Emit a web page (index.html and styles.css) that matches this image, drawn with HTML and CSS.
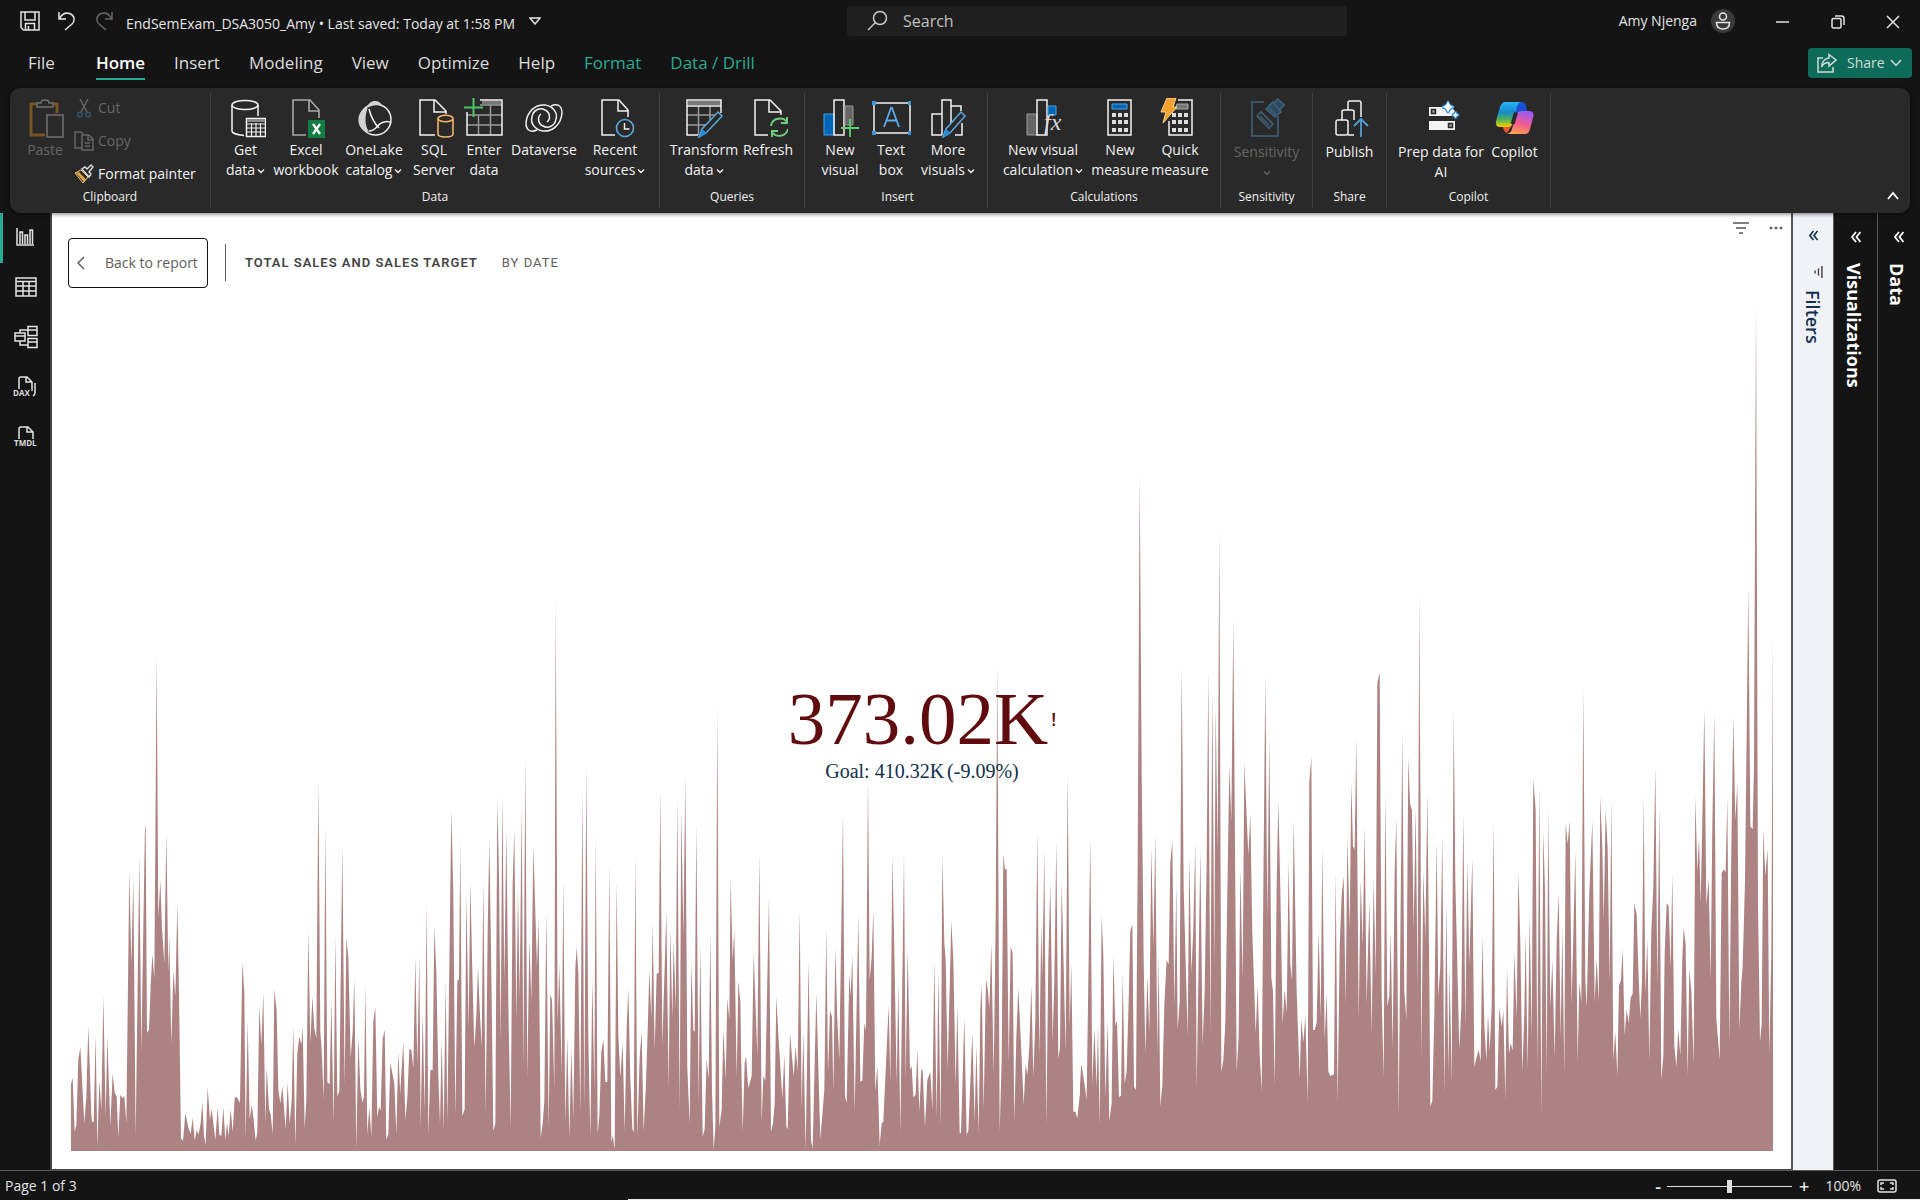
FILE: index.html
```html
<!DOCTYPE html>
<html lang="en">
<head>
<meta charset="utf-8">
<title>EndSemExam_DSA3050_Amy</title>
<link rel="stylesheet" href="styles.css">
</head>
<body>
<svg class="defs" aria-hidden="true">
  <symbol id="chev" viewBox="0 0 8 6"><path d="M1 1.5 4 4.5 7 1.5" fill="none" stroke="currentColor" stroke-width="1.4"/></symbol>
  <symbol id="dbl" viewBox="0 0 10 12"><path d="M5 1 1 6l4 5M9.500 1l-4 5 4 5" fill="none" stroke="currentColor" stroke-width="1.800"/></symbol>
</svg>
<div class="app">
  <header class="titlebar">
    <div class="quick">
      <button class="qbtn" aria-label="Save"><svg width="20" height="20" viewBox="0 0 20 20"><path d="M1 1h18v18H3.500L1 16.500zM5 1v8h10V1M5.500 19v-6.500h9V19M8.500 19v-4" class="ln"/></svg></button>
      <button class="qbtn" aria-label="Undo"><svg width="20" height="20" viewBox="0 0 20 20"><path d="M2 1v7h7M2.500 7.500C5 3 9 1.500 12.500 2.500c5 1.500 6 7 2.500 10.500L8 19" class="ln"/></svg></button>
      <button class="qbtn dim" aria-label="Redo" disabled><svg width="20" height="20" viewBox="0 0 20 20"><path d="M18 1v7h-7M17.500 7.500C15 3 11 1.500 7.500 2.500c-5 1.500-6 7-2.500 10.500L12 19" class="ln"/></svg></button>
      <span class="doc">EndSemExam_DSA3050_Amy • Last saved: Today at 1:58 PM</span>
      <button class="docmenu" aria-label="File details"><svg width="12" height="8" viewBox="0 0 12 8"><path d="M1 1h10L6 7z" class="ln"/></svg></button>
    </div>
    <label class="search"><svg width="22" height="22" viewBox="0 0 22 22"><circle cx="13" cy="8" r="6.500" class="ln"/><path d="M8.500 12.500 1 20" class="ln"/></svg><input type="text" placeholder="Search" aria-label="Search"></label>
    <div class="window">
      <span>Amy Njenga</span>
      <svg class="avatar" width="24" height="24" viewBox="0 0 24 24"><circle cx="12" cy="12" r="12" fill="#3a3a3a"/><circle cx="12" cy="7.500" r="3.500" class="ln"/><path d="M5.500 13.500h13c0 4-2.500 6.500-6.500 6.500s-6.500-2.500-6.500-6.500z" class="ln"/></svg>
      <button class="wbtn" aria-label="Minimize"><svg width="14" height="14" viewBox="0 0 14 14"><path d="M0 7h13" class="ln"/></svg></button>
      <button class="wbtn" aria-label="Restore"><svg width="14" height="14" viewBox="0 0 14 14"><rect x="1" y="3.500" width="9" height="9.500" rx="1.500" class="ln"/><path d="M4 1h6.500Q13 1 13 3.500V10" class="ln"/></svg></button>
      <button class="wbtn" aria-label="Close"><svg width="14" height="14" viewBox="0 0 14 14"><path d="m1 1 12 12M13 1 1 13" class="ln"/></svg></button>
    </div>
  </header>

  <nav class="tabs" aria-label="Ribbon tabs">
    <a href="#" class="file">File</a><a href="#" class="on">Home</a><a href="#">Insert</a><a href="#">Modeling</a><a href="#">View</a><a href="#">Optimize</a><a href="#">Help</a><a href="#" class="ctx">Format</a><a href="#" class="ctx">Data / Drill</a>
    <button class="share"><svg width="20" height="20" viewBox="0 0 20 20"><path d="M6 5H1v14h15v-5M12 1.500 19 7l-7 6V9.500C8 9.500 6 11 4.500 14 5 8.500 8 5.500 12 5z" class="ln"/></svg>Share<svg width="12" height="8" viewBox="0 0 12 8"><path d="m1 1 5 5.500L11 1" class="ln"/></svg></button>
  </nav>

  <section class="ribbon">
    <div class="group clip">
      <div class="tools">
        <button class="tool dim" disabled><svg viewBox="0 0 40 40"><path d="M13 6H6v31h14M27 6h5v9" fill="none" stroke="#7a5325" stroke-width="3"/><path d="M12 9V5h4c0-4 8-4 8 0h4v4z" fill="#292929" stroke="#707070" stroke-width="1.500"/><rect x="22" y="17" width="16" height="22" fill="#292929" stroke="#707070" stroke-width="1.500"/></svg><span>Paste</span></button>
        <div class="stack">
          <button class="row dim" disabled><svg viewBox="0 0 20 20"><path d="m6 1 7 13M14 1 7 14" class="ln"/><circle cx="6" cy="16.500" r="2.300" fill="none" stroke="#33566e" stroke-width="1.500"/><circle cx="14" cy="16.500" r="2.300" fill="none" stroke="#33566e" stroke-width="1.500"/></svg>Cut</button>
          <button class="row dim" disabled><svg viewBox="0 0 20 20"><path d="M8 17H1V1h6l2 2M8 4h7l4 4v11H8zM14 4v5h5M11 12h5M11 15h5" class="ln"/></svg>Copy</button>
          <button class="row"><svg viewBox="0 0 20 20"><path d="m2 9 8 9 2-2.500L5 8z" fill="#e8a33c"/><path d="m1 9 8 10 5-6-7-7z" fill="none" stroke="#f5c77e"/><path d="m8 5 7 8 2-3-2-2 4-5-2-2-4 4-2-2z" fill="#292929" stroke="#ddd" stroke-width="1.400"/></svg>Format painter</button>
        </div>
      </div>
      <div class="gname">Clipboard</div>
    </div>

    <div class="group data">
      <div class="tools">
        <button class="tool"><svg viewBox="0 0 40 40"><ellipse cx="19" cy="7" rx="13" ry="4.500" class="ln"/><path d="M6 7v26c0 2 5 4 12 4.500M32 7v11" class="ln"/><path d="M20.500 20.500h19v18h-19z" class="ln"/><path d="M21 22.500h18" stroke="#8a8a8a" stroke-width="3"/><path d="M21 26h18M21 30h18M21 34h18M25.500 25v13M30 25v13M34.500 25v13" class="ln thin"/></svg><span>Get</span><span>data<svg class="cv"><use href="#chev"/></svg></span></button>
        <button class="tool"><svg viewBox="0 0 40 40"><path d="M20 37H7V2h17l9 10v8M23 2v11h10" fill="none" stroke="#a8a8a8" stroke-width="1.600"/><rect x="22" y="22" width="17" height="18" fill="#107c41"/><path d="m27 26 7 10M34 26l-7 10" stroke="#fff" stroke-width="2.200"/></svg><span>Excel</span><span>workbook</span></button>
        <button class="tool"><svg viewBox="0 0 40 40"><circle cx="21.500" cy="21.500" r="15.500" class="ln"/><path d="M14 9C4 12 2 23 7 30c3 4 6 4 8 3.500C10 27 11 17 14 9zM13 10c2-9 13-9 16-1-5-3-11-2-16 1z" fill="#d2d2d2"/><path d="M15 11c2 8 5 14 10 19M15 33c8 0 8-8 15-9 3-1 5-1 7 1" class="ln"/></svg><span>OneLake</span><span>catalog<svg class="cv"><use href="#chev"/></svg></span></button>
        <button class="tool"><svg viewBox="0 0 40 40"><path d="M21 37H6V2h15l11 11v3M20 2v12h12" class="ln"/><path d="M24 21v15c0 4 15 4 15 0V21" fill="#292929" stroke="#f3b567" stroke-width="1.600"/><ellipse cx="31.500" cy="20.500" rx="7.500" ry="3.200" fill="#292929" stroke="#f3b567" stroke-width="1.600"/></svg><span>SQL</span><span>Server</span></button>
        <button class="tool"><svg viewBox="0 0 40 40"><path d="M18 4.500h19" stroke="#777" stroke-width="4"/><path d="M16 7h22M16 17h22M3 17h35M3 27h35M14.500 17v20M26.500 7v30" fill="none" stroke="#999" stroke-width="1.500"/><path d="M16 2h22v35H3V14" class="ln"/><path d="M0 9.500h19M9.500 0v19" stroke="#4ec466" stroke-width="2"/></svg><span>Enter</span><span>data</span></button>
        <button class="tool"><svg viewBox="0 0 40 40"><path id="swirl" d="M13 32C6 35 2 32 2 25 3 13 12 6 21 7c8 1 13 8 11 14-1 7-8 10-13 7-5-2-6-9-2-12" class="ln"/><use href="#swirl" transform="rotate(180 20 20)"/></svg><span>Dataverse</span></button>
        <button class="tool"><svg viewBox="0 0 40 40"><path d="M20 37H7V2h17l9 10v7M23 2v11h10" class="ln"/><circle cx="30" cy="30" r="8.500" fill="none" stroke="#5aa9dd" stroke-width="1.600"/><path d="M29.500 25v6h5" class="ln"/></svg><span>Recent</span><span>sources<svg class="cv"><use href="#chev"/></svg></span></button>
      </div>
      <div class="gname">Data</div>
    </div>

    <div class="group queries">
      <div class="tools">
        <button class="tool"><svg viewBox="0 0 40 40"><path d="M4 5h33" stroke="#777" stroke-width="4"/><path d="M3 17h29M3 27h20M14.500 8v29M26 8v14" fill="none" stroke="#999" stroke-width="1.500"/><path d="M37 15V2H3v35h11M3 8h34" class="ln"/><path d="m15 39 3-8 16-17 4 4-16 17z" fill="#292929" stroke="#5aa9dd" stroke-width="1.500"/><path d="m15 39 3-8 5 4z" fill="#2a8bd8"/></svg><span>Transform</span><span>data<svg class="cv"><use href="#chev"/></svg></span></button>
        <button class="tool"><svg viewBox="0 0 40 40"><path d="M20 37H7V2h15l11 11v4M21 2v12h12" class="ln"/><path d="M23 28c1-8 12-10 16-4M39 19v6h-6M40 31c-2 8-12 9-16 3M24 39v-6h6" fill="none" stroke="#6fce7c" stroke-width="1.900"/></svg><span>Refresh</span></button>
      </div>
      <div class="gname">Queries</div>
    </div>

    <div class="group insert">
      <div class="tools">
        <button class="tool"><svg viewBox="0 0 40 40"><rect x="4" y="16" width="10" height="21" fill="#0067b8" stroke="#4aa0e0"/><path d="M14 37V2h10v35z" class="ln"/><path d="M25 8h8v19h-8z" fill="#666" stroke="#999"/><path d="M21 30h18M30 21v18" stroke="#5fd070" stroke-width="1.800"/></svg><span>New</span><span>visual</span></button>
        <button class="tool"><svg viewBox="0 0 40 40"><path d="M3 5h36v30H3z" class="ln"/><path d="M1 3h4v4H1zM37 3h4v4h-4zM1 33h4v4H1zM37 33h4v4h-4z" fill="#3a96dd"/><path d="m13 29 7-19h1l7 19M15.500 22.500h10" fill="none" stroke="#5aa9e8" stroke-width="1.800"/></svg><span>Text</span><span>box</span></button>
        <button class="tool"><svg viewBox="0 0 40 40"><path d="M14 37H4V16h10M14 37V2h9v24M23 8h10v5M27 37h7V25" class="ln"/><path d="m15 39 3-8 15-17 4 4-15 17z" fill="#292929" stroke="#5aa9dd" stroke-width="1.500"/><path d="m15 39 3-8 5 4z" fill="#2a8bd8"/></svg><span>More</span><span>visuals<svg class="cv"><use href="#chev"/></svg></span></button>
      </div>
      <div class="gname">Insert</div>
    </div>

    <div class="group calc">
      <div class="tools">
        <button class="tool"><svg viewBox="0 0 40 40"><rect x="4" y="16" width="10" height="21" fill="#666" stroke="#999"/><path d="M14 37V2h10v35z" class="ln"/><path d="M25 8h8v9h-8z" fill="#0067b8" stroke="#4aa0e0"/><text x="21" y="32" class="fx">fx</text></svg><span>New visual</span><span>calculation<svg class="cv"><use href="#chev"/></svg></span></button>
        <button class="tool"><svg viewBox="0 0 40 40"><path d="M8 2h23v35H8z" class="ln"/><path d="M12 6h15v5H12z" fill="#0067b8" stroke="#4aa0e0"/><path d="M12 17h16M12 24h16M12 32h16" stroke="#ddd" stroke-width="4" stroke-dasharray="4 2"/></svg><span>New</span><span>measure</span></button>
        <button class="tool"><svg viewBox="0 0 40 40"><path d="M18 2h14v35H9V23" class="ln"/><path d="M17 6h11v5H15z" fill="#777" stroke="#aaa"/><path d="M12 17h16M12 24h16M12 32h16" stroke="#ddd" stroke-width="4" stroke-dasharray="4 2"/><path d="M7 0h9l-3 9h4L3 25l3-11H1z" fill="#f2a12c" stroke="#ffd28a"/></svg><span>Quick</span><span>measure</span></button>
      </div>
      <div class="gname">Calculations</div>
    </div>

    <div class="group sens">
      <div class="tools">
        <button class="tool wide dim" disabled><svg viewBox="0 0 40 40"><g fill="none" stroke="#3f6078" stroke-width="1.600"><path d="M17 4H5v34h26V18"/><path d="m10 18 4-4 12 12-4 4zM13 18l9 9"/><path d="m19 11 7-7 8 10-6 5zM27 5l4-4 6 6-5 6M21 9l9 9" fill="#2d4a5e"/></g></svg><span>Sensitivity</span><span class="only"><svg class="cv"><use href="#chev"/></svg></span></button>
      </div>
      <div class="gname">Sensitivity</div>
    </div>

    <div class="group pub">
      <div class="tools">
        <button class="tool wide"><svg viewBox="0 0 40 40"><g class="ln"><rect x="6" y="22" width="12" height="15" rx="2"/><path d="M12 22v-8q0-2 2-2h8q2 0 2 2v8M18 37h6M18 12V5q0-2 2-2h9q2 0 2 2v14"/></g><path d="M31 39V21M24 28l7-7 7 7" fill="none" stroke="#4f9fd6" stroke-width="1.800"/></svg><span>Publish</span></button>
      </div>
      <div class="gname">Share</div>
    </div>

    <div class="group ai">
      <div class="tools">
        <button class="tool wide"><svg viewBox="0 0 40 40"><path d="M8 9h22l4 4v5H8zM8 23h26v9H8z" fill="#f4f4f4"/><path d="M10.500 11.500h4v4h-4zM27.500 25.500h4v4h-4z" fill="#999" stroke="#292929" stroke-width="1.500"/><path d="M27 3q1 5 6 6-5 1-6 6-1-5-6-6 5-1 6-6zM34.500 13.500q.5 3 3.500 3.500-3 .5-3.500 3.500-.5-3-3.500-3.500 3-.5 3.500-3.500z" fill="#2a8bd8" stroke="#2a8bd8" stroke-width="2.400"/><path d="M27 3q1 5 6 6-5 1-6 6-1-5-6-6 5-1 6-6zM34.500 14q.5 2.500 3 3-2.500.5-3 3-.5-2.500-3-3 2.500-.5 3-3z" fill="#fff"/></svg><span>Prep data for</span><span>AI</span></button>
        <button class="tool wide"><svg viewBox="0 0 40 40"><defs><linearGradient id="ca" x1="0" y1="0" x2="0" y2="1"><stop offset="0" stop-color="#2bb3f3"/><stop offset=".4" stop-color="#168ad0"/><stop offset=".7" stop-color="#4fb35b"/><stop offset="1" stop-color="#ffd000"/></linearGradient><linearGradient id="cb" x1=".6" y1="0" x2=".3" y2="1"><stop offset="0" stop-color="#9a5cf5"/><stop offset=".5" stop-color="#ee5a93"/><stop offset="1" stop-color="#ffa04d"/></linearGradient></defs><path d="M22 4h5q3 0 4 4l1 5h-7l-5 5z" fill="#1850d8"/><path d="M12 35q-2 0-3-3l-2-5h8l4-3z" fill="#f05a2c"/><path d="M10 4h16q-3 1-4 5l-4 15q-1 5-6 5H5q-5 0-4-6l4-14q2-5 5-5z" fill="url(#ca)"/><path d="M30 36H12q4-1 5-5l4-13q1-5 6-5h7q6 0 4 7l-3 11q-1 5-5 5z" fill="url(#cb)"/><path d="M21 14.500 17.500 26" stroke="#292929" stroke-width="4"/></svg><span>Copilot</span></button>
      </div>
      <div class="gname">Copilot</div>
    </div>
    <button class="fold" aria-label="Collapse ribbon"><svg width="12" height="10" viewBox="0 0 12 10"><path d="m1 8 5-6 5 6" fill="none" stroke="#fff" stroke-width="1.800"/></svg></button>
  </section>

  <div class="work">
    <nav class="views" aria-label="Views">
      <button class="sel" aria-label="Report view"><svg viewBox="0 0 24 24"><path d="M3 3v17h17M6 19V7h2.500v12M11 19v-9h2.500v9M16 19V5h2.500v14" class="ln"/></svg></button>
      <button aria-label="Table view"><svg viewBox="0 0 24 24"><path d="M2 3h20v18H2zM2 6.500h20M2 11h20M2 16h20M9 6v15M15 6v15" class="ln"/></svg></button>
      <button aria-label="Model view"><svg viewBox="0 0 24 24"><path d="M1 8h10v8H1zM1 11h10M14 1.500h9v9h-9zM14 5h9M14 13.500h9v9h-9zM14 17h9M6 8V5h8M6 16v4h8" class="ln"/></svg></button>
      <button aria-label="DAX query view"><svg viewBox="0 0 24 24"><path d="M5 14V4q0-2 2-2h6l5 5v9M12 2v5h6M21 8v10q0 2-2 3" class="ln"/><text x="-1" y="21" class="cap">DAX</text></svg></button>
      <button aria-label="TMDL view"><svg viewBox="0 0 24 24"><path d="M5 14V4q0-2 2-2h7l5 5v7M13 2v5h6" class="ln"/><text x="0" y="21" class="cap">TMDL</text></svg></button>
    </nav>

    <main class="canvas">
      <div class="drill">
        <button class="back"><svg width="8" height="14" viewBox="0 0 8 14"><path d="M7 1 1 7l6 6" class="ln"/></svg>Back to report</button>
        <h1>TOTAL SALES AND SALES TARGET</h1>
        <span class="by">BY DATE</span>
        <button class="vis first" aria-label="Filters"><svg width="16" height="14" viewBox="0 0 16 14"><path d="M0 2h16M3 7h10M6 12h4" class="ln"/></svg></button>
        <button class="vis" aria-label="More options"><svg width="14" height="4" viewBox="0 0 14 4"><circle cx="2" cy="2" r="1.500"/><circle cx="7" cy="2" r="1.500"/><circle cx="12" cy="2" r="1.500"/></svg></button>
      </div>
      <div class="kpi">
        <svg class="trend" viewBox="71 290 1702 861" preserveAspectRatio="none" role="img" aria-label="Total sales trend by date">
          <polygon transform="translate(60 600) scale(.33333 .35714)" points="33,1543 33,1355 38,1338 44,1490 49,1470 55,1285 61,1252 73,1465 79,1390 85,1192 94,1440 96,1460 101,1462 107,1218 112,1530 118,1345 124,1428 130,1110 137,1450 142,1222 151,1472 158,1325 164,1380 170,1390 175,1505 181,1385 188,1395 193,1388 199,1465 208,760 214,1020 220,778 227,1505 238,715 244,1265 255,630 257,640 261,1212 267,1205 272,1080 277,992 283,1060 290,160 295,890 301,785 306,920 313,1018 319,655 325,1042 328,942 334,1245 340,1038 346,1110 352,850 357,1100 363,1508 369,1514 376,1438 386,1480 392,1496 398,1450 404,1514 410,1485 416,1496 422,1465 427,1405 432,1500 437,1525 443,1365 450,1455 455,1425 466,1512 473,1420 478,1498 484,1500 490,1420 496,1512 501,1465 506,1500 512,1425 518,1490 524,1395 530,1391 540,1408 547,1015 553,1100 557,1510 563,1178 569,1455 575,1413 581,1455 587,1514 592,1490 598,1135 604,1245 610,1100 616,1465 620,1308 627,1425 632,1440 638,1495 643,1090 650,1150 655,1370 661,1410 667,1360 677,1482 683,1350 689,1468 695,1400 700,1192 706,1528 712,1270 718,1222 724,1245 728,1195 734,1480 739,1400 745,925 751,1242 757,1110 763,1200 769,1228 775,508 781,1210 785,1260 791,1398 796,635 802,1350 809,1355 814,1120 821,1468 826,940 832,1390 838,1375 847,690 854,1360 859,945 865,1000 872,1280 878,1210 883,1060 889,1535 895,1220 901,1370 907,1408 912,1390 916,1080 922,1496 928,1420 934,1503 940,1180 946,1140 952,1448 957,1420 962,1428 968,1230 974,1203 979,1512 985,1495 991,1295 1003,1355 1009,1495 1015,1265 1021,1390 1021,1543"/>
          <polygon transform="translate(400 580) scale(.33333 .36990)" points="0,1544 0,1395 10,1248 16,1460 22,1400 28,1268 34,1270 40,1320 46,1020 52,1310 58,1018 62,1480 68,1170 74,1435 80,870 85,1500 91,1325 98,1325 103,940 109,1060 115,1340 120,1470 125,1245 131,1488 137,1085 142,1465 154,620 160,850 166,1450 172,1083 177,1080 181,710 187,1450 194,1430 199,850 206,1212 211,815 217,1060 223,1265 229,1180 234,1045 239,1160 245,1262 250,812 257,1442 263,950 268,700 274,1060 280,1488 286,1470 292,590 297,800 302,1245 307,582 313,1085 319,675 326,1200 332,1485 338,820 343,675 349,1190 354,840 359,1130 365,610 370,1320 376,480 382,1345 388,972 394,1138 400,720 406,900 411,1045 416,918 422,1508 428,1470 433,1410 439,895 446,1480 451,1120 456,1135 463,1375 467,50 473,1200 478,1038 485,1335 490,808 496,1465 502,1235 508,1508 514,1268 520,1455 526,1050 530,992 535,1060 541,1442 547,565 553,1430 559,500 565,1240 571,1505 577,1078 583,1380 587,690 593,1495 598,1450 604,1275 610,1243 616,1357 622,1357 628,770 634,1520 638,1502 644,1538 650,812 655,1230 661,1345 668,1250 674,1492 680,1210 685,1105 691,1350 697,1485 701,1492 706,742 712,1505 719,1290 725,1222 731,1490 737,1380 743,1220 748,1055 754,1185 758,925 764,1270 770,1065 776,1062 781,568 787,1258 799,895 806,1375 811,942 817,1185 821,975 827,1160 832,590 839,1435 844,620 850,965 856,530 862,1320 869,1470 874,1035 880,1218 884,1222 889,662 896,1415 901,985 908,1505 914,1485 920,1295 926,1350 931,955 936,1380 941,1540 946,1480 952,345 958,1480 965,1430 970,1213 977,1350 982,1133 988,1188 992,805 998,1030 1003,945 1010,1345 1015,1085 1021,1140 1021,1544"/>
          <polygon transform="translate(740 660) scale(.33333)" points="0,1473 0,1015 8,1415 14,1210 18,1188 25,1285 35,1248 41,878 52,1190 58,580 65,1385 70,1248 76,1262 87,710 93,1415 99,1390 104,1330 109,1008 115,1125 127,1315 133,1185 139,1400 143,1408 150,1120 161,1248 167,1160 173,1235 179,750 185,1345 190,1115 197,1470 206,900 213,1440 218,1465 229,1000 241,1438 253,1290 259,805 264,1240 270,1052 276,1070 280,1295 286,865 292,1080 298,1200 309,460 315,1310 320,1328 328,940 332,1008 337,885 344,1355 355,765 361,1265 367,1262 373,1090 378,1110 384,355 389,960 395,890 400,750 406,1295 412,1215 419,1455 425,1390 430,1385 446,1035 451,1265 457,588 463,870 470,1270 475,965 481,1415 492,582 497,1260 503,865 510,1228 515,1218 520,1312 527,1305 532,1168 538,1355 544,1228 548,1230 555,1402 562,1260 571,1236 577,1350 583,903 590,1375 595,935 602,1400 607,585 613,850 617,900 623,1228 634,782 640,900 647,1275 652,1035 659,1418 663,1420 673,1075 680,1425 685,1412 697,1120 704,1385 709,1155 716,1420 721,1050 725,972 731,1350 738,958 743,985 748,1045 754,850 761,1245 767,780 772,15 779,1415 785,1200 790,583 795,630 800,625 806,1210 812,860 818,880 823,1385 829,1130 835,985 845,1195 851,1335 857,1212 862,1245 868,1160 874,975 880,1250 886,1080 892,512 898,1190 904,790 907,950 913,570 919,1395 925,900 931,670 938,1145 943,960 949,545 955,1195 960,1165 965,665 977,1175 983,340 989,1100 994,910 1000,1355 1006,1355 1012,1375 1021,1290 1021,1473"/>
          <polygon transform="translate(1080 460) scale(.33333 .44643)" points="0,1548 0,1400 4,1352 14,1400 20,1432 31,845 37,1400 43,1272 50,1405 54,1265 59,1490 65,1020 70,1110 76,1428 83,1258 88,1482 95,1440 100,1112 106,1268 111,1255 117,1427 123,1424 128,1152 134,1398 140,1370 146,1210 151,1055 157,1040 162,1402 168,1412 173,900 179,35 185,700 191,1120 196,1330 202,1155 208,1282 214,868 220,1090 226,840 232,1328 236,1110 241,1448 247,1400 253,1220 260,1120 266,1130 271,900 277,855 283,1222 289,950 293,1275 299,1215 305,462 311,960 323,1290 328,888 334,1150 340,1050 346,855 350,1410 361,875 368,1310 374,1190 380,900 385,472 391,1285 397,515 403,1135 407,555 413,875 418,160 424,1370 430,1345 436,1260 448,685 454,810 460,358 470,1370 476,1290 481,915 488,1165 493,678 505,885 511,793 517,1060 523,1190 527,1285 533,1178 539,1330 545,1415 550,960 556,485 562,1025 568,622 574,1160 579,1190 584,1400 590,950 595,765 601,960 608,1265 614,1185 620,1240 626,897 631,1130 636,1165 641,805 650,1190 659,1385 664,1252 670,1305 676,1245 683,1440 688,720 694,665 699,1277 704,1277 710,1260 716,1055 722,1250 727,870 734,1298 740,1195 745,1370 751,1380 762,1376 767,922 773,1440 779,1090 785,975 791,933 797,1220 802,845 809,1050 814,722 819,865 824,872 829,622 836,1255 842,940 848,1085 854,820 860,1218 868,988 875,1285 881,938 887,1155 892,500 899,475 905,1200 911,1385 916,740 922,1224 928,1200 932,1055 938,1318 944,920 949,802 956,1470 967,610 973,1190 979,1255 985,665 990,770 996,785 1001,1050 1007,778 1013,1180 1018,300 1021,800 1021,1548"/>
          <polygon transform="translate(1420 300) scale(.33333 .54845)" points="0,1552 0,770 4,1385 10,1040 16,1165 22,900 28,1240 31,1470 37,1460 43,1300 50,988 55,1270 61,1215 67,975 73,1448 79,1100 85,1410 89,1215 95,1430 101,750 106,1060 118,1368 124,1290 130,935 136,1325 142,1025 148,1212 157,1018 163,1398 170,1380 176,1367 182,1388 187,1160 193,1320 199,1388 204,1300 209,1370 215,1290 221,950 226,1440 232,1435 238,1290 245,1325 250,1295 256,1455 261,1215 267,1375 272,1355 278,1368 283,1192 290,1308 295,1045 301,1170 307,1408 313,1300 317,1155 323,1405 329,1120 335,1345 340,872 347,930 352,1405 358,882 364,1485 370,968 375,1080 380,1410 385,930 391,1290 397,1203 404,1380 410,1170 416,1082 422,1345 427,1145 433,1412 437,953 443,992 449,950 455,1285 466,1005 473,1390 478,1243 484,1282 490,710 496,1240 500,1290 508,1080 517,950 524,1280 530,1200 536,1280 541,905 547,1000 551,1130 557,930 563,1000 569,1245 574,910 580,1385 586,1335 592,1415 597,1250 603,1240 608,1183 614,1340 620,1293 626,1318 632,1272 638,1265 643,1100 650,1120 655,1220 661,1310 666,1240 671,905 676,1265 682,1165 688,1388 694,1150 700,1070 706,850 712,1250 718,925 724,1422 730,1380 734,1190 740,1100 746,1105 752,1220 757,1045 763,1360 769,1398 775,1330 781,1378 787,1200 791,1145 797,1175 803,1415 808,1220 814,1260 821,1392 826,905 832,1042 837,980 842,1100 847,950 853,745 859,1105 866,1055 872,1240 877,960 883,755 889,1310 899,1385 905,1045 911,1038 917,1043 922,908 928,1355 934,1000 940,760 946,950 952,880 958,1330 964,1245 968,1215 975,1060 985,525 991,960 998,965 1002,850 1008,10 1014,1100 1020,1352 1025,1320 1030,965 1036,1050 1043,1000 1048,1378 1054,1190 1059,610 1059,1552"/>
        </svg>
        <div class="reading">
          <div class="value">373.02K<span class="flag">!</span></div>
          <div class="goal"><span>Goal: 410.32K</span><span>(-9.09%)</span></div>
        </div>
      </div>
    </main>

    <aside class="pane filters"><button aria-label="Expand filters"><svg width="9" height="11"><use href="#dbl"/></svg></button><svg class="fi" width="10" height="12" viewBox="0 0 10 12"><path d="M9 0v12M5.500 2.500v7M2 4.500v3" stroke="#444" stroke-width="1.400"/></svg><h2>Filters</h2></aside>
    <aside class="pane"><button aria-label="Expand visualizations"><svg width="10" height="12"><use href="#dbl"/></svg></button><h2>Visualizations</h2></aside>
    <aside class="pane last"><button aria-label="Expand data"><svg width="10" height="12"><use href="#dbl"/></svg></button><h2>Data</h2></aside>
  </div>

  <footer class="status">
    <span class="page">Page 1 of 3</span>
    <button aria-label="Zoom out">-</button>
    <input type="range" min="0" max="100" value="50" aria-label="Zoom">
    <button aria-label="Zoom in">+</button>
    <span class="pct">100%</span>
    <button class="fit" aria-label="Fit to page"><svg width="20" height="14" viewBox="0 0 20 14"><rect x="1" y="1" width="18" height="12" rx="2" class="ln"/><path d="M7 4H4v2M4 8v2h3M13 4h3v2M16 8v2h-3" class="ln"/></svg></button>
  </footer>
</div>
</body>
</html>
```
FILE: styles.css
```css
* { box-sizing: border-box; }
body { margin: 0; background: #141414; color: #e4e4e4; font: 14px/20px "Open Sans", "Noto Sans", sans-serif; }
button, input { font: inherit; color: inherit; background: none; border: 0; padding: 0; margin: 0; }
svg { display: block; flex: none; }
.defs { position: absolute; width: 0; height: 0; }
.ln { fill: none; stroke: currentColor; stroke-width: 1.5; }
.thin { stroke-width: 1.2; }
.app { display: flex; flex-direction: column; min-height: 100vh; }

.titlebar { display: grid; grid-template-columns: 847fr 500fr 573fr; height: 42px; }
.quick { display: flex; align-items: center; padding-left: 20px; }
.qbtn { width: 37px; }
.qbtn.dim { color: #666; width: 32px; }
.doc { padding: 6px 14px 0 0; white-space: nowrap; }
.search { display: flex; align-items: center; gap: 14px; height: 30px; margin-top: 6px; padding-left: 20px; background: #1f1f1f; border-radius: 3px; color: #c8c8c8; }
.search input { flex: 1; min-width: 0; font-size: 16px; outline: none; }
.search input::placeholder { color: #c0c0c0; opacity: 1; }
.window { display: flex; align-items: center; justify-content: flex-end; padding-right: 20px; }
.avatar { margin: 0 41px 0 14px; }
.wbtn { width: 14px; margin-left: 41px; padding-top: 2px; }
.avatar + .wbtn { margin-left: 0; }

.tabs { display: flex; align-items: center; gap: 29px; height: 46px; padding: 0 8px 4px 28px; }
.tabs a { color: #dcdcdc; text-decoration: none; font-size: 17px; line-height: 22px; padding: 6px 0 4px; border-bottom: 2px solid transparent; white-space: nowrap; }
.tabs .file { margin-right: 12px; }
.tabs .on { color: #fff; font-weight: 600; border-color: #28ab93; }
.tabs .ctx { color: #28ab93; font-weight: 500; }
.share { display: flex; align-items: center; gap: 10px; margin-left: auto; width: 104px; height: 30px; padding: 0 9px; border-radius: 4px; background: #0d6b5a; color: #d0dcd8; }
.share svg:last-child { margin-left: -5px; }

.ribbon { display: flex; margin: 0 10px; height: 125px; background: #292929; border-radius: 10px; padding: 5px 0; position: relative; z-index: 1; box-shadow: 0 1px 4px #0008; color: #f2f2f2; }
.group { display: flex; flex-direction: column; justify-content: space-between; border-right: 1px solid #404040; padding: 5px 8px 3px; }
.tools { display: grid; }
.tool { display: flex; flex-direction: column; align-items: center; white-space: nowrap; line-height: 20px; min-width: 0; }
.tool > svg { width: 40px; height: 40px; margin-bottom: 2px; }
.tool.wide > svg { margin-bottom: 4px; }
.tool span { display: flex; align-items: center; gap: 2px; }
.tool span.only { min-height: 20px; }
.cv { width: 8px; height: 6px; }
.tool span:nth-of-type(2) .cv { margin-top: 2px; }
.dim { color: #666; }
.gname { text-align: center; font-size: 12px; line-height: 16px; }
.clip { width: 201px; }
.clip .tools { grid-template-columns: 54px 1fr; }
.stack { display: flex; flex-direction: column; gap: 13px; padding: 0 0 0 2px; }
.row { display: flex; align-items: center; gap: 4px; line-height: 20px; white-space: nowrap; }
.row svg { width: 20px; height: 20px; }
.data .tools { grid-template-columns: 53px 68px 68px 52px 48px 72px 70px; }
.data { width: 449px; }
.queries { width: 145px; }
.queries .tools { grid-template-columns: 72px 56px; }
.insert { width: 183px; padding-left: 11px; }
.insert .tools { grid-template-columns: 48px 54px 60px; }
.calc { width: 233px; }
.calc .tools { grid-template-columns: 94px 60px 60px; }
.sens { width: 92px; }
.pub { width: 74px; }
.ai { width: 164px; }
.ai .tools { grid-template-columns: 92px 55px; }
.fold { margin: auto 11px 7px auto; }
.fx { font: italic 24px "Liberation Serif", serif; fill: #d8d8d8; }

.work { display: flex; flex: 1; }
.views { width: 52px; border-right: 2px solid #444; }
.views button { display: flex; align-items: center; justify-content: center; width: 50px; height: 50px; padding: 0 1px 3px 0; border-left: 3px solid transparent; }
.views .sel { border-color: #28ab93; }
.views svg { width: 24px; height: 24px; overflow: visible; }
.cap { font: 700 8px "Open Sans", sans-serif; fill: #ddd; stroke: #141414; stroke-width: 2; paint-order: stroke; }
.canvas { flex: 1; min-width: 0; display: flex; flex-direction: column; background: #fff; color: #333; padding-bottom: 18px; border-bottom: 1px solid #444; }
.drill { display: flex; align-items: center; height: 77px; padding: 22px 8px 0 16px; }
.back { display: flex; align-items: center; gap: 20px; width: 140px; height: 50px; padding-left: 8px; border: 1px solid #111; border-radius: 4px; color: #605e5c; white-space: nowrap; }
h1 { margin: 0 0 0 17px; padding-left: 19px; border-left: 1px solid #605e5c; font: 600 13px/37px Roboto, sans-serif; letter-spacing: 1px; color: #444; white-space: nowrap; }
.by { margin-left: 24px; font: 13px/37px Roboto, sans-serif; letter-spacing: 1px; color: #605e5c; }
.vis { align-self: flex-start; height: 14px; margin: -14px 0 0 20px; color: #555; fill: #666; }
.vis.first { margin-left: auto; }
.kpi { flex: 1; display: grid; margin: 0 18px 0 19px; }
.trend { grid-area: 1 / 1; width: 100%; height: 100%; min-height: 400px; fill: #ad8282; }
.reading { grid-area: 1 / 1; align-self: center; justify-self: center; display: flex; flex-direction: column; align-items: center; padding-top: 20px; font-family: "Liberation Serif", serif; }
.value { display: flex; align-items: center; font-size: 75px; line-height: 80px; color: #600b0e; }
.flag { font: 600 18px/20px "Open Sans", sans-serif; margin-left: 3px; }
.goal { display: flex; gap: 3px; font-size: 20px; line-height: 24px; color: #12304c; }

.pane { width: 44px; display: flex; flex-direction: column; align-items: center; padding-top: 18px; border-left: 1px solid #5a5a5a; color: #fff; }
.pane h2 { margin: 20px 4px 0 0; writing-mode: vertical-rl; font-size: 18px; line-height: 22px; font-weight: 700; }
.pane.last { width: 43px; }
.filters { width: 42px; background: #f0f2f7; color: #12304c; padding-top: 17px; border-left: 2px solid #555; }
.filters .fi { margin: 25px 0 0 10px; }
.filters h2 { margin: 12px 0 0; font-weight: 600; }

.status { display: flex; align-items: center; height: 30px; padding: 1px 23px 0 5px; border-top: 1px solid #5a5a5a; background: linear-gradient(90deg, transparent 628px, #e8e8e8 628px) bottom / 100% 1px no-repeat; }
.page { margin-right: auto; }
.status button { font-size: 18px; font-weight: 600; line-height: 20px; }
.status input { appearance: none; width: 125px; height: 14px; margin: 0 7px 0 6px; background: linear-gradient(#ddd, #ddd) center / 100% 1px no-repeat; }
.status input::-webkit-slider-thumb { appearance: none; width: 5px; height: 13px; background: #ddd; }
.pct { margin: 0 16px; }
```
